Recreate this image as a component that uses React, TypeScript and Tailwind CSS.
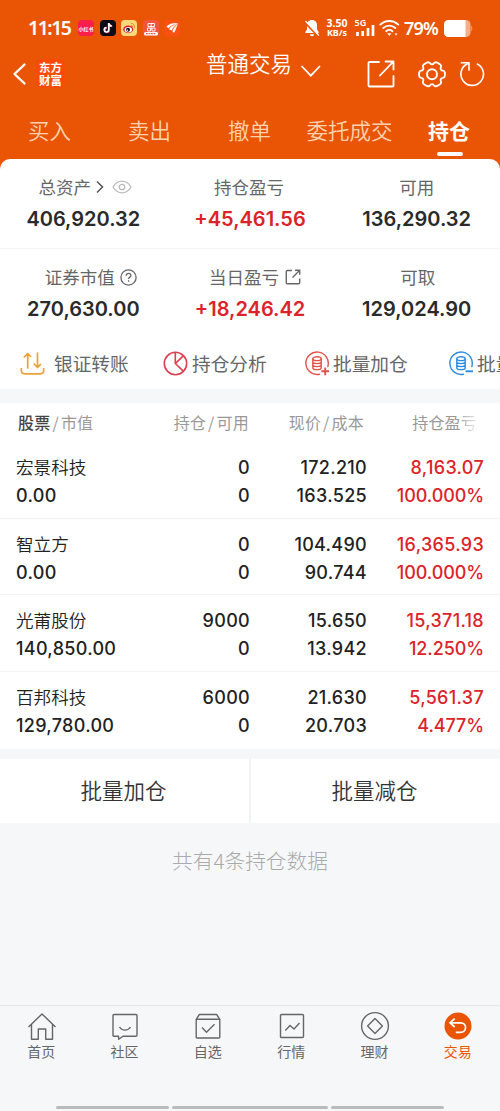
import type { ReactNode } from "react";

const ORANGE = "#e95504";

type Holding = {
  name: string;
  value: string;
  amount: string;
  usable: string;
  price: string;
  cost: string;
  profit: string;
  rate: string;
};

const TABS = ["买入", "卖出", "撤单", "委托成交", "持仓"];

const HOLDINGS: Holding[] = [
  {
    name: "宏景科技",
    value: "0.00",
    amount: "0",
    usable: "0",
    price: "172.210",
    cost: "163.525",
    profit: "8,163.07",
    rate: "100.000%",
  },
  {
    name: "智立方",
    value: "0.00",
    amount: "0",
    usable: "0",
    price: "104.490",
    cost: "90.744",
    profit: "16,365.93",
    rate: "100.000%",
  },
  {
    name: "光莆股份",
    value: "140,850.00",
    amount: "9000",
    usable: "0",
    price: "15.650",
    cost: "13.942",
    profit: "15,371.18",
    rate: "12.250%",
  },
  {
    name: "百邦科技",
    value: "129,780.00",
    amount: "6000",
    usable: "0",
    price: "21.630",
    cost: "20.703",
    profit: "5,561.37",
    rate: "4.477%",
  },
];

function StatusBar() {
  return (
    <div className="flex h-[56px] items-center pr-[27px] pl-[28px] text-white">
      <span className="w-[50px] font-['Noto_Sans'] text-[19.500px] leading-none font-semibold tracking-[-1.500px]">
        11:15
      </span>

      {/* 알림 앱 아이콘 */}
      <div className="flex gap-[5.5px]">
        <span className="flex size-4 items-center justify-center rounded-[4px] bg-[#fa1e4b] text-[5px] leading-none font-bold whitespace-nowrap">
          小红书
        </span>
        <svg width="16" height="16" viewBox="0 0 16 16">
          <rect width="16" height="16" rx="4" fill="#0b0b16" />
          <path d="M8.700 3v6.800a2.200 2.200 0 1 1-2.200-2.200M8.700 3.200c.2 1.700 1.400 2.700 3.100 2.800" fill="none" stroke="#f4315b" strokeWidth="1.700" transform="translate(.5 .4)" />
          <path d="M8.700 3v6.800a2.200 2.200 0 1 1-2.200-2.200M8.700 3.200c.2 1.700 1.400 2.700 3.100 2.800" fill="none" stroke="#fff" strokeWidth="1.700" />
        </svg>
        <svg width="16" height="16" viewBox="0 0 16 16">
          <rect width="16" height="16" rx="4" fill="#f9d97c" />
          <ellipse cx="7.200" cy="9.300" rx="5" ry="3.900" fill="#d8222c" />
          <ellipse cx="7.300" cy="9.700" rx="3.700" ry="2.700" fill="#fff" />
          <circle cx="7" cy="9.800" r="2" fill="#1b1213" />
          <circle cx="6.400" cy="10.200" r=".7" fill="#fff" />
          <path d="M10.300 3.300a3.300 3.300 0 0 1 3.200 4.300M10.400 5.400a1.400 1.400 0 0 1 1.300 1.700" fill="none" stroke="#ee8b1f" strokeWidth="1" strokeLinecap="round" />
        </svg>
        <svg width="16" height="16" viewBox="0 0 16 16">
          <rect width="16" height="16" rx="4" fill="#f4533e" />
          <path d="M5 3.500h6.500v3H5zM8.200 3.500v6M4.500 8h3v3h-3zM9 8h3v3H9z" fill="none" stroke="#fff" strokeWidth=".9" />
          <rect x="1" y="12" width="14" height="3.400" rx="1.500" fill="#fff" />
          <path d="M3 13.700h10" stroke="#f4533e" strokeWidth="1.200" strokeDasharray="1.800 .7" />
        </svg>
        <svg width="16" height="16" viewBox="0 0 16 16">
          <rect width="16" height="16" rx="4" fill="#fb5013" />
          <path d="M2.500 6.500C5 3.800 9.500 2.800 14 3.200 10 4 6.600 5.500 4.300 8.200zM5 9.200C7 6.300 10.300 4.300 14 3.600c-3 1.800-5.300 4-6.400 7zM8.400 11.200c.9-3 3-5.700 5.600-7.300-1.300 2.500-2.300 5.800-4 9.100z" fill="#fff" />
        </svg>
      </div>

      <div className="ml-auto flex items-center">
        <svg width="16" height="18" viewBox="0 0 16 18" className="mr-[6px]">
          <path d="M8 1c-3.300 0-5 2.300-5 5.300v4L1.300 13v1h13.400v-1L13 10.300v-4C13 3.300 11.300 1 8 1zM5.800 15.200a2.200 2 0 0 0 4.400 0z" fill="#fff" />
          <path d="M.8 3l13.400 14" stroke={ORANGE} strokeWidth="2.400" />
          <path d="M1.500 2l13.400 14.500" stroke="#fff" strokeWidth="1.300" />
        </svg>
        <div className="mr-[7px] flex w-[22px] flex-col items-center font-['Noto_Sans'] leading-[9.500px] font-bold">
          <span className="text-[10.500px]">3.50</span>
          <span className="text-[9px]">KB/s</span>
        </div>
        <svg width="20" height="18" viewBox="0 0 20 18" className="mr-[4px] overflow-visible">
          <text x="-.5" y="7" fill="#fff" fontSize="9" fontWeight="600" fontFamily="Noto Sans, sans-serif">
            5G
          </text>
          <path d="M2.500 13v4M7.700 12v5M13 9v8M18 6v11" stroke="#fff" strokeWidth="2.700" />
        </svg>
        <svg width="21" height="18" viewBox="0 0 21 18" className="mr-[4px]">
          <g fill="none" stroke="#fff" strokeWidth="1.900" strokeLinecap="round">
            <path d="M1.300 5.600a13 13 0 0 1 18 0" />
            <path d="M4.300 9a8.700 8.700 0 0 1 12 0" />
            <path d="M7.200 12.200a4.600 4.600 0 0 1 6.200 0" />
          </g>
          <path d="M8.200 14.300h4.200l-2.100 2.700z" fill="#fff" />
          <path d="M15.500 14.500h3l-1.500 2z" fill="#fff" />
        </svg>
        <span className="mr-[5px] w-[35px] font-['Noto_Sans'] text-[18px] leading-none font-semibold tracking-[-0.800px]">
          79%
        </span>
        <svg width="29" height="17" viewBox="0 0 29 17">
          <rect x="0" y="0" width="26.500" height="17" rx="4.500" fill="#f5ae86" />
          <path d="M4.500 0H21.500v17H4.500A4.500 4.500 0 0 1 0 12.500v-8A4.500 4.500 0 0 1 4.500 0z" fill="#fff" />
          <path d="M27.300 5.500c1.300.8 1.300 5.200 0 6z" fill="#f5ae86" />
        </svg>
      </div>
    </div>
  );
}

function TitleBar() {
  return (
    <div className="flex h-[47px] items-start pl-[12px] text-white">
      <svg width="15" height="24" viewBox="0 0 15 24" className="mt-[6px]" fill="none">
        <path d="M12.500 2.500L2.500 12l10 9.500" stroke="#fff" strokeWidth="2.400" strokeLinecap="round" strokeLinejoin="round" />
      </svg>
      <div className="mt-[3px] ml-[9px] flex h-[29px] w-[29px] flex-col items-center justify-center rounded-[6px] bg-[#fb4a08] text-[11.500px] leading-[12.500px] font-bold">
        <span>东方</span>
        <span>财富</span>
      </div>
      <span className="mt-[-6px] ml-[141px] w-[87px] text-[21.500px] leading-[26px] font-[350] whitespace-nowrap">普通交易</span>
      <svg width="22" height="14" viewBox="0 0 22 14" className="mt-[8px] ml-[7px]" fill="none">
        <path d="M1.500 2l9.300 9.700L20 2" stroke="#fff" strokeWidth="1.700" />
      </svg>
      <svg width="28" height="28" viewBox="0 0 28 28" className="mt-[4px] ml-[45px]" fill="none" stroke="#fff" strokeWidth="1.800">
        <path d="M12 2H2.500a1 1 0 0 0-1 1v22.500a1 1 0 0 0 1 1H25.500a1 1 0 0 0 1-1V16M18.500 1.500h8v8M26.300 1.700L13 15.500" strokeLinecap="round" strokeLinejoin="round" />
      </svg>
      <svg width="30" height="30" viewBox="0 0 30 30" className="mt-[3px] ml-[22px]" fill="none" stroke="#fff" strokeWidth="1.900">
        <path d="M10.500 3.300a2.300 2.300 0 0 1 2.600 1 2.200 2.200 0 0 0 3.800 0 2.300 2.300 0 0 1 2.600-1 12 12 0 0 1 3.900 2.300 2.300 2.300 0 0 1 .5 2.700 2.200 2.200 0 0 0 1.900 3.300 2.300 2.300 0 0 1 2 1.800 12 12 0 0 1 0 3.700 2.300 2.300 0 0 1-2 1.800 2.200 2.200 0 0 0-1.900 3.300 2.300 2.300 0 0 1-.5 2.700 12 12 0 0 1-3.900 2.300 2.300 2.300 0 0 1-2.600-1 2.200 2.200 0 0 0-3.800 0 2.300 2.300 0 0 1-2.600 1 12 12 0 0 1-3.900-2.300 2.300 2.300 0 0 1-.5-2.700 2.200 2.200 0 0 0-1.900-3.300 2.300 2.300 0 0 1-2-1.800 12 12 0 0 1 0-3.700 2.300 2.300 0 0 1 2-1.800 2.200 2.200 0 0 0 1.900-3.300 2.300 2.300 0 0 1 .5-2.700 12 12 0 0 1 3.900-2.300z" />
        <circle cx="15" cy="15.300" r="5" />
      </svg>
      <svg width="26" height="26" viewBox="0 0 26 26" className="mt-[5px] ml-[12px]" fill="none" stroke="#fff" strokeWidth="1.600">
        <path d="M18.300 3a11.300 11.300 0 1 1-9.300-.4" strokeLinecap="round" />
        <path d="M1.800 1.700h8.200v8" strokeLinejoin="round" />
      </svg>
    </div>
  );
}

function Tabs() {
  return (
    <div className="grid h-[56px] grid-cols-5">
      {TABS.map((tab) =>
        tab === "持仓" ? (
          <div key={tab} className="flex flex-col items-center pt-[12px] text-[21px] leading-[30px] font-bold text-white">
            <span className="pr-[2px]">{tab}</span>
            <span className="mt-[7px] h-[4px] w-[26px] rounded-full bg-white" />
          </div>
        ) : (
          <div
            key={tab}
            className="pt-[12px] pr-px text-center text-[21.500px] leading-[30px] font-[350] whitespace-nowrap text-[#ffd3b0]"
          >
            {tab}
          </div>
        )
      )}
    </div>
  );
}

type SummaryCellProps = {
  label: string;
  value: string;
  red?: boolean;
  icon?: ReactNode;
  labelClass?: string;
};

function SummaryCell({ label, value, red, icon, labelClass = "" }: SummaryCellProps) {
  return (
    <div className="flex flex-col items-center">
      <div className={`flex h-[26px] items-center text-[17.500px] leading-[26px] text-[#666] ${labelClass}`}>
        <span className="-mt-px">{label}</span>
        {icon}
      </div>
      <span
        className={`mt-[6px] font-['Inter'] text-[20px] leading-[26px] font-semibold ${red ? "text-[#dc2329]" : "text-[#2a2a2a]"}`}
      >
        {value}
      </span>
    </div>
  );
}

function Summary() {
  return (
    <section>
      <div className="grid h-[90px] grid-cols-3 border-b border-[#f3f3f3] pt-[15px]">
        <SummaryCell
          label="总资产"
          value="406,920.32"
          labelClass="pl-[4px]"
          icon={
            <>
              <svg width="8" height="14" viewBox="0 0 8 14" className="ml-[5px]" fill="none">
                <path d="M1 1.500L6.500 7 1 12.500" stroke="#555" strokeWidth="1.500" />
              </svg>
              <svg width="20" height="14" viewBox="0 0 20 14" className="ml-[8px]" fill="none" stroke="#bbb" strokeWidth="1.300">
                <path d="M1 7c2.200-3.700 5.300-5.800 9-5.800S16.800 3.300 19 7c-2.200 3.700-5.300 5.800-9 5.800S3.200 10.700 1 7z" />
                <circle cx="10" cy="7" r="2.700" />
              </svg>
            </>
          }
        />
        <SummaryCell label="持仓盈亏" value="+45,461.56" red labelClass="pr-[2px]" />
        <SummaryCell label="可用" value="136,290.32" />
      </div>
      <div className="grid h-[89px] grid-cols-3 pt-[15px]">
        <SummaryCell
          label="证券市值"
          value="270,630.00"
          labelClass="pl-[15px]"
          icon={
            <svg width="17" height="17" viewBox="0 0 17 17" className="ml-[5px]" fill="none" stroke="#666" strokeWidth="1.300">
              <circle cx="8.500" cy="8.500" r="7.600" />
              <path d="M6.200 6.800c0-1.500 1-2.400 2.400-2.400s2.300.9 2.300 2.100c0 1.700-2.300 1.800-2.300 3.500M8.600 11.300v1.500" />
            </svg>
          }
        />
        <SummaryCell
          label="当日盈亏"
          value="+18,246.42"
          red
          labelClass="pl-[10px]"
          icon={
            <svg width="16" height="16" viewBox="0 0 16 16" className="ml-[6px]" fill="none" stroke="#666" strokeWidth="1.400">
              <path d="M7 1.500H2.300a1 1 0 0 0-1 1v11.300a1 1 0 0 0 1 1h11.400a1 1 0 0 0 1-1V9.500M10 1.200h4.700v4.600M14.500 1.400L7.500 8.500" />
            </svg>
          }
        />
        <SummaryCell label="可取" value="129,024.90" labelClass="pl-[2px]" />
      </div>
    </section>
  );
}

function CoinIcon({ color, minus }: { color: string; minus?: boolean }) {
  return (
    <svg width="25" height="25" viewBox="0 0 25 25" fill="none" stroke={color} strokeWidth="1.400">
      <path d="M14.500 23.200A11.200 11.200 0 1 1 22.800 15.500" strokeLinecap="round" />
      <ellipse cx="12" cy="7.700" rx="4.200" ry="1.900" />
      <path d="M7.800 7.700v9c0 1.100 1.900 1.900 4.200 1.900s4.200-.8 4.200-1.900v-9M7.800 10.800c0 1.100 1.900 1.800 4.200 1.800s4.200-.7 4.200-1.800M7.800 13.800c0 1.100 1.900 1.800 4.200 1.800s4.200-.7 4.200-1.800" />
      <path d={minus ? "M16.500 20.300h7.500" : "M16.300 20.300h7.700M20.200 16.500v7.700"} strokeWidth="1.900" />
    </svg>
  );
}

function QuickActions() {
  return (
    <div className="flex h-[51px] items-center overflow-hidden pl-[20px] text-[18.700px] leading-[28px] whitespace-nowrap text-[#666]">
      <div className="flex w-[143px] shrink-0 items-center">
        <svg width="25" height="25" viewBox="0 0 25 25" fill="none" stroke="#eea13a" strokeWidth="1.700" strokeLinecap="round" strokeLinejoin="round">
          <path d="M1.300 17.500v1.800c0 2.300 1.300 3.500 3.500 3.500h15.400c2.200 0 3.500-1.200 3.500-3.500v-1.800" />
          <path d="M7.700 17V2.500L4.300 6M7.700 2.500L10.500 5.500M17.500 2v14.500l-3.300-3.500M17.500 16.500l3-3.200" />
        </svg>
        <span className="-mt-px ml-[9px]">银证转账</span>
      </div>
      <div className="flex w-[142px] shrink-0 items-center">
        <svg width="25" height="25" viewBox="0 0 25 25" fill="none" stroke="#dc4150" strokeWidth="1.600">
          <circle cx="12.500" cy="12.500" r="11.200" />
          <path d="M12.300 1.300v11.200l8 7.700M12.500 12.300l7.800-7.500" />
        </svg>
        <span className="-mt-px ml-[4px]">持仓分析</span>
      </div>
      <div className="flex w-[144px] shrink-0 items-center">
        <CoinIcon color="#e0524a" />
        <span className="-mt-px ml-[3px]">批量加仓</span>
      </div>
      <div className="flex shrink-0 items-center">
        <CoinIcon color="#2b8be0" minus />
        <span className="-mt-px ml-[3px]">批量减仓</span>
      </div>
    </div>
  );
}

function HoldingTable() {
  return (
    <section className="bg-white">
      <div className="flex h-[39px] items-center pt-px pb-[2px] text-[16px] leading-[24px] tracking-[0.200px] whitespace-nowrap text-[#999]">
        <div className="w-[150px] pl-[18px]">
          <span className="font-medium text-[#444]">股票</span>
          <span className="px-[2px]">/</span>市值
        </div>
        <div className="w-[99px] text-right">
          持仓<span className="px-[2px]">/</span>可用
        </div>
        <div className="w-[115px] text-right">
          现价<span className="px-[2px]">/</span>成本
        </div>
        <div className="w-[113px] text-right">
          持仓盈<span className="bg-linear-to-r from-[#aaa] to-[#eee] bg-clip-text text-transparent">亏</span>
        </div>
      </div>
      {HOLDINGS.map((item) => (
        <div
          key={item.name}
          className="flex h-[76.700px] border-b border-[#f3f3f3] px-4 pt-[12px] font-['Inter'] text-[18px] leading-[28px] font-medium tracking-[0.300px] text-[#222] last:border-b-0"
        >
          <div className="flex w-[134px] flex-col">
            <span className="-mt-px mb-px font-['Noto_Sans_CJK_SC'] text-[17.600px] font-[350] tracking-normal">{item.name}</span>
            <span>{item.value}</span>
          </div>
          <div className="flex w-[100px] flex-col text-right">
            <span>{item.amount}</span>
            <span>{item.usable}</span>
          </div>
          <div className="flex w-[117px] flex-col text-right">
            <span>{item.price}</span>
            <span>{item.cost}</span>
          </div>
          <div className="flex w-[117px] flex-col text-right text-[#dc2329]">
            <span>{item.profit}</span>
            <span className="tracking-[-0.100px]">{item.rate}</span>
          </div>
        </div>
      ))}
    </section>
  );
}

function NavItem({ label, active, children }: { label: string; active?: boolean; children: ReactNode }) {
  return (
    <div className={`flex flex-col items-center ${active ? "text-[#e95504]" : "text-[#666]"}`}>
      <svg width="30" height="30" viewBox="0 0 30 30" fill="none" stroke="#666" strokeWidth="1.400">
        {children}
      </svg>
      <span className="pr-px text-[14px] leading-[20px]">{label}</span>
    </div>
  );
}

function BottomNav() {
  return (
    <nav className="h-[106px] border-t border-[#e4e5e7]">
      <div className="grid h-[100px] grid-cols-6 pt-[5px]">
        <NavItem label="首页">
          <path d="M1.500 16L15 3l13.500 13M4.500 13.500V28.300h6.800V18h7.400v10.300h6.800V13.500" strokeLinejoin="round" />
        </NavItem>
        <NavItem label="社区">
          <path d="M4 3.500h22a1 1 0 0 1 1 1v19.800a1 1 0 0 1-1 1H13l-4.300 3-.2-3H4a1 1 0 0 1-1-1V4.500a1 1 0 0 1 1-1z" strokeLinejoin="round" />
          <path d="M9.500 16c2.500 4.200 8.500 4.200 11 0" />
        </NavItem>
        <NavItem label="自选">
          <path d="M3.200 8.300h23.600v17.700a1 1 0 0 1-1 1H4.200a1 1 0 0 1-1-1zM3.200 8.300l3.200-4.800h17.200l3.200 4.800" strokeLinejoin="round" />
          <path d="M9 16.500l4.500 4.700 8-8" />
        </NavItem>
        <NavItem label="行情">
          <rect x="3.500" y="3.500" width="23" height="23" rx="1" />
          <path d="M8.300 19.500l4.700-5 4 3.500 5.500-6" />
        </NavItem>
        <NavItem label="理财">
          <circle cx="15" cy="15" r="13.400" />
          <path d="M15 7.600l7.400 7.400-7.400 7.400L7.600 15z" strokeLinejoin="round" />
        </NavItem>
        <NavItem label="交易" active>
          <circle cx="15" cy="15" r="13.500" fill={ORANGE} stroke="none" />
          <path d="M11.700 7.700L7 11.800l4.700 4.200M7.300 11.800h10.500a4.700 4.700 0 0 1 0 9.500h-5" stroke="#fff" strokeWidth="1.700" />
        </NavItem>
      </div>
      <div className="flex justify-center gap-[3px] pr-[1px]">
        <span className="h-[3px] w-[113px] rounded-full bg-[#bbb]" />
        <span className="h-[3px] w-[156px] rounded-full bg-[#bbb]" />
        <span className="h-[3px] w-[113px] rounded-full bg-[#bbb]" />
      </div>
    </nav>
  );
}

function App() {
  return (
    <main className="flex h-[1111px] w-[500px] flex-col overflow-hidden bg-[#f6f7f9] font-['Noto_Sans_CJK_SC',sans-serif]">
      <div className="bg-[#e95504]">
        <StatusBar />
        <TitleBar />
        <Tabs />
        <div className="h-[230px] rounded-t-[10px] bg-white">
          <Summary />
          <QuickActions />
        </div>
      </div>

      <div className="mt-[14px]">
        <HoldingTable />
      </div>

      {/* 하단 일괄 매매 버튼 */}
      <div className="mt-[10px] grid h-[64px] grid-cols-2 bg-white text-[21.500px] font-[350] text-[#333]">
        <button className="border-r border-[#f1f2f4] pr-[2px] pb-[2px]">批量加仓</button>
        <button className="border-l border-[#f1f2f4] pr-[2px] pb-[2px]">批量减仓</button>
      </div>

      <p className="mt-[21px] text-center text-[20.700px] leading-[32px] font-light text-[#aaa]">共有4条持仓数据</p>

      <div className="mt-auto">
        <BottomNav />
      </div>
    </main>
  );
}

export default App;
